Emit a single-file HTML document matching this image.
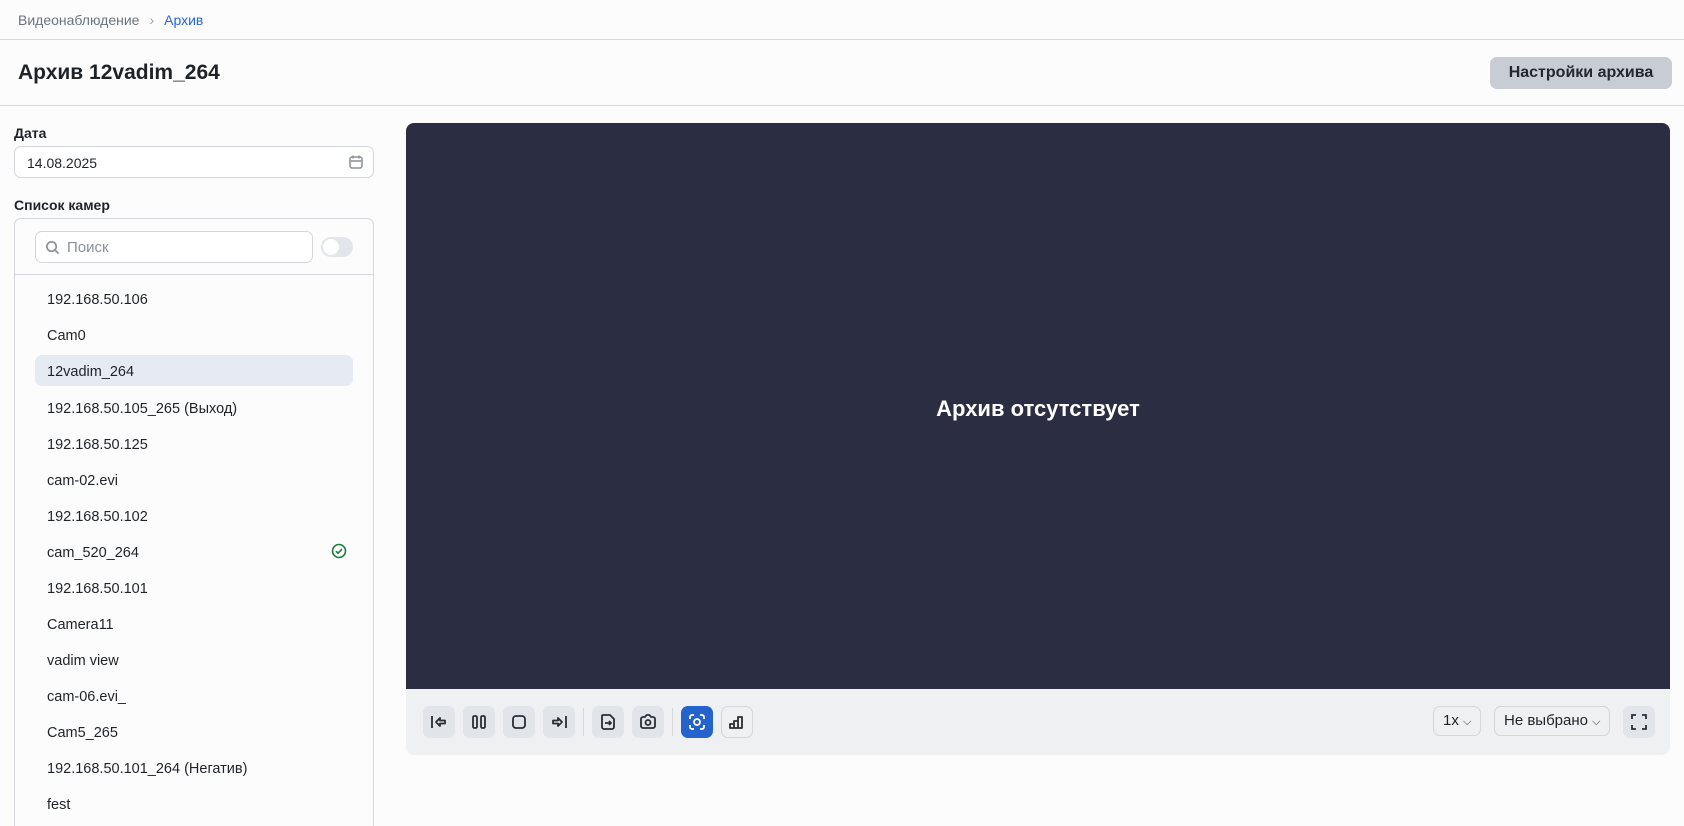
<!DOCTYPE html>
<html style="height:826px;overflow:hidden"><head><meta charset="utf-8"><style>
*{box-sizing:border-box;margin:0;padding:0}
body{width:1684px;height:826px;overflow:hidden;background:#fcfcfc;font-family:"Liberation Sans","DejaVu Sans",sans-serif;color:#1f2328;position:relative}
.abs{position:absolute}
.bc{left:18px;top:12px;font-size:14px;color:#6b7280}
.bc b{font-weight:normal;color:#2563eb;margin-left:10px}
.bc i{font-style:normal;margin-left:10px;color:#9ca3af}
.hl{left:0;width:1684px;height:1px;background:#d6d9de}
.title{left:18px;top:61px;font-size:21px;font-weight:bold}
.btn{left:1490px;top:57px;width:182px;height:32px;background:#c8ccd4;border-radius:7px;font-size:16px;font-weight:bold;color:#23272e;text-align:center;line-height:32px}
.lbl{font-size:14px;font-weight:bold;left:14px}
.inp{left:14px;top:146px;width:360px;height:32px;border:1px solid #d3d6db;border-radius:7px;font-size:14px;padding:8px 12px;background:#fff}
.box{left:14px;top:218px;width:360px;height:608px;border:1px solid #d3d6db;border-bottom:none;border-radius:7px 7px 0 0;background:#fcfcfc}
.srch{left:35px;top:231px;width:278px;height:32px;border:1px solid #d3d6db;border-radius:7px;background:#fff;font-size:15px;color:#8b9099;padding:7px 0 0 31px}
.tog{left:321px;top:237px;width:32px;height:20px;background:#e2e5e9;border-radius:10px}
.tog:after{content:"";position:absolute;left:2px;top:2px;width:16px;height:16px;border-radius:8px;background:#fff}
.row{left:47px;font-size:14.5px;color:#1f2328}
.sel{left:35px;top:355px;width:318px;height:31px;background:#e5eaf3;border-radius:7px}
.video{left:406px;top:123px;width:1264px;height:566px;background:#2b2d42;border-radius:8px 8px 0 0}
.msg{left:406px;width:1264px;top:396px;text-align:center;font-size:22px;font-weight:bold;color:#fff}
.tb{left:406px;top:689px;width:1264px;height:66px;background:#eef0f2;border-radius:0 0 8px 8px}
.b{position:absolute;top:706px;width:32px;height:32px;border-radius:7px;background:#e1e4e8;display:flex;align-items:center;justify-content:center}
.sep{position:absolute;top:708px;width:1px;height:28px;background:#d3d6db}
.dd{position:absolute;top:706px;height:30px;border:1px solid #d3d6db;border-radius:7px;font-size:15px;color:#1f2328;padding:5px 0 0 9px}
svg{display:block}
</style></head><body>
<div class="abs bc">Видеонаблюдение<i>›</i><b>Архив</b></div>
<div class="abs hl" style="top:39px"></div>
<div class="abs title">Архив 12vadim_264</div>
<div class="abs btn">Настройки архива</div>
<div class="abs hl" style="top:105px"></div>
<div class="abs lbl" style="top:125px">Дата</div>
<div class="abs inp">14.08.2025</div>
<svg class="abs" style="left:348px;top:154px" width="16" height="16" viewBox="0 0 16 16" fill="none" stroke="#8b9099" stroke-width="1.5"><rect x="2" y="3" width="12" height="11" rx="2"/><path d="M2 7h12M5 1.5v3M11 1.5v3"/></svg>
<div class="abs lbl" style="top:197px">Список камер</div>
<div class="abs box"></div>
<div class="abs srch">Поиск</div>
<svg class="abs" style="left:45px;top:240px" width="15" height="15" viewBox="0 0 16 16" fill="none" stroke="#8b9099" stroke-width="1.8"><circle cx="7" cy="7" r="5"/><path d="M11 11l3.5 3.5"/></svg>
<div class="abs tog"></div>
<div class="abs hl" style="left:15px;width:358px;top:274px"></div>
<div class="abs sel"></div>
<div class="abs row" style="top:292px">192.168.50.106</div>
<div class="abs row" style="top:328px">Cam0</div>
<div class="abs row" style="top:364px">12vadim_264</div>
<div class="abs row" style="top:401px">192.168.50.105_265 (Выход)</div>
<div class="abs row" style="top:437px">192.168.50.125</div>
<div class="abs row" style="top:473px">cam-02.evi</div>
<div class="abs row" style="top:509px">192.168.50.102</div>
<div class="abs row" style="top:545px">cam_520_264</div>
<svg class="abs" style="left:331px;top:543px" width="16" height="16" viewBox="0 0 16 16" fill="none" stroke="#1e7a3c" stroke-width="1.6"><circle cx="8" cy="8" r="6.5"/><path d="M5 8.2l2 2 4-4"/></svg>
<div class="abs row" style="top:581px">192.168.50.101</div>
<div class="abs row" style="top:617px">Camera11</div>
<div class="abs row" style="top:653px">vadim view</div>
<div class="abs row" style="top:689px">cam-06.evi_</div>
<div class="abs row" style="top:725px">Cam5_265</div>
<div class="abs row" style="top:761px">192.168.50.101_264 (Негатив)</div>
<div class="abs row" style="top:797px">fest</div>
<div class="abs video"></div>
<div class="abs msg">Архив отсутствует</div>
<div class="abs tb"></div>
<div class="b" style="left:423px"><svg width="20" height="20" viewBox="0 0 20 20" fill="none" stroke="#2a2d33" stroke-width="1.8" stroke-linejoin="round"><path d="M3 4v12M7 10l4-4v2.5h5v3h-5V14z"/></svg></div>
<div class="b" style="left:463px"><svg width="20" height="20" viewBox="0 0 20 20" fill="none" stroke="#2a2d33" stroke-width="1.8"><rect x="4" y="4" width="4" height="12" rx="1.5"/><rect x="12" y="4" width="4" height="12" rx="1.5"/></svg></div>
<div class="b" style="left:503px"><svg width="20" height="20" viewBox="0 0 20 20" fill="none" stroke="#2a2d33" stroke-width="1.8"><rect x="4" y="4" width="12" height="12" rx="3"/></svg></div>
<div class="b" style="left:543px"><svg width="20" height="20" viewBox="0 0 20 20" fill="none" stroke="#2a2d33" stroke-width="1.8" stroke-linejoin="round"><path d="M17 4v12M13 10l-4-4v2.5H4v3h5V14z"/></svg></div>
<div class="sep" style="left:583px"></div>
<div class="b" style="left:592px"><svg width="20" height="20" viewBox="0 0 20 20" fill="none" stroke="#2a2d33" stroke-width="1.8" stroke-linejoin="round"><path d="M5 3h7l4 4v8a2 2 0 0 1-2 2H6a2 2 0 0 1-2-2V4a1 1 0 0 1 1-1zM7 11h6M11 9l2 2-2 2"/></svg></div>
<div class="b" style="left:632px"><svg width="20" height="20" viewBox="0 0 20 20" fill="none" stroke="#2a2d33" stroke-width="1.8" stroke-linejoin="round"><path d="M3 7a2 2 0 0 1 2-2h2l1.5-2h3L13 5h2a2 2 0 0 1 2 2v7a2 2 0 0 1-2 2H5a2 2 0 0 1-2-2z"/><circle cx="10" cy="10.5" r="2.5"/></svg></div>
<div class="sep" style="left:672px"></div>
<div class="b" style="left:681px;background:#2563cc"><svg width="20" height="20" viewBox="0 0 20 20" fill="none" stroke="#fff" stroke-width="1.8"><path d="M3 7V5a2 2 0 0 1 2-2h2M13 3h2a2 2 0 0 1 2 2v2M17 13v2a2 2 0 0 1-2 2h-2M7 17H5a2 2 0 0 1-2-2v-2"/><circle cx="10" cy="10" r="3"/></svg></div>
<div class="b" style="left:721px;background:#eef0f2;border:1px solid #d3d6db"><svg width="20" height="20" viewBox="0 0 20 20" fill="none" stroke="#2a2d33" stroke-width="1.8" stroke-linejoin="round"><path d="M3 16v-4h4v4zM7 16V9h4v7zM11 16V5h4v11zM3 16h12"/></svg></div>
<div class="dd" style="left:1433px;width:48px">1x <span style="font-size:11px">⌵</span></div>
<div class="dd" style="left:1494px;width:116px">Не выбрано <span style="font-size:11px">⌵</span></div>
<div class="b" style="left:1623px"><svg width="20" height="20" viewBox="0 0 20 20" fill="none" stroke="#2a2d33" stroke-width="1.8"><path d="M3 7V3h4M13 3h4v4M17 13v4h-4M7 17H3v-4"/></svg></div>
</body></html>
